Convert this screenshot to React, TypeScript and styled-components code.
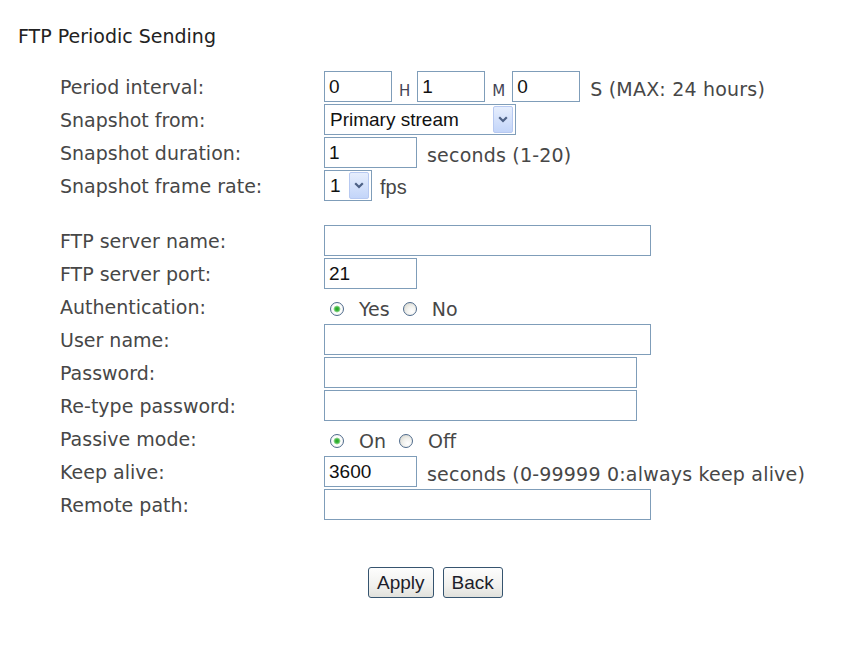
import React from 'react';
import styled, { createGlobalStyle } from 'styled-components';

const GlobalStyle = createGlobalStyle`
  body {
    margin: 0;
    background: #fff;
    font-family: "DejaVu Sans", Verdana, sans-serif;
  }
`;

const Page = styled.div`
  padding: 25px 0 40px 18px;
`;

const Title = styled.h1`
  margin: 0;
  font-size: 19px;
  line-height: 22px;
  font-weight: normal;
  color: #222;
`;

const Form = styled.div`
  margin: 23px 0 0 42px;
`;

const Row = styled.div`
  display: grid;
  grid-template-columns: 264px 1fr;
  height: 33px;
  align-items: center;
`;

const Spacer = styled.div`
  height: 22px;
`;

const Label = styled.div`
  font-size: 19px;
  line-height: 22px;
  color: #474747;
  white-space: nowrap;
`;

const Controls = styled.div`
  display: flex;
  align-items: center;
  height: 100%;
  font-size: 19px;
  color: #474747;
  white-space: nowrap;
`;

const TextBox = styled.input<{ $w: number }>`
  box-sizing: border-box;
  width: ${(p) => p.$w}px;
  height: 31px;
  margin: 0;
  padding: 0 4px;
  border: 1px solid #7f9db9;
  background: #fff;
  font-family: "Liberation Sans", Arial, sans-serif;
  font-size: 19px;
  color: #111;
  outline: none;
`;

const Unit = styled.span`
  font-size: 15px;
  color: #445;
  margin: 0 7px;
  padding-top: 8px;
`;

const Suffix = styled.span<{ $arial?: boolean }>`
  margin-left: ${(p) => (p.$arial ? 8 : 10)}px;
  padding-top: 4px;
  font-family: ${(p) => (p.$arial ? '"Liberation Sans", Arial, sans-serif' : 'inherit')};
  font-size: ${(p) => (p.$arial ? 20 : 19)}px;
  letter-spacing: ${(p) => (p.$arial ? 0 : 0.2)}px;
`;

const SelectShell = styled.div<{ $w: number }>`
  box-sizing: border-box;
  width: ${(p) => p.$w}px;
  height: 31px;
  display: flex;
  align-items: center;
  padding: 1px 2px 1px 5px;
  border: 1px solid #7f9db9;
  background: #fff;
  font-family: "Liberation Sans", Arial, sans-serif;
  font-size: 19px;
  color: #111;
`;

const SelectValue = styled.span`
  flex: 1;
`;

const ArrowButton = styled.span`
  box-sizing: border-box;
  width: 20px;
  height: 27px;
  display: flex;
  align-items: center;
  justify-content: center;
  border: 1px solid #b7c9f1;
  border-radius: 2px;
  background: linear-gradient(#e6eefd, #c3d5f9);
`;

const RadioGroup = styled.div`
  display: flex;
  align-items: center;
  gap: 13px;
  padding: 5px 0 0 6px;
`;

const Option = styled.label`
  display: flex;
  align-items: center;
  gap: 15px;
`;

const Radio = styled.input`
  appearance: none;
  box-sizing: border-box;
  width: 14px;
  height: 14px;
  margin: 0;
  border: 1.5px solid #4f6b8c;
  border-radius: 50%;
  background: radial-gradient(circle at 65% 70%, #fff 0, #f0f0ec 45%, #cfcfc6 100%);
  &:checked {
    background: radial-gradient(circle, #1f9f1f 0, #42bb42 2px, #9bd69b 3px, #fff 3.8px, #ececea 100%);
  }
`;

const ButtonBar = styled.div`
  display: flex;
  gap: 9px;
  margin-top: 46px;
  padding-left: 350px;
`;

const Button = styled.button`
  box-sizing: border-box;
  height: 31px;
  padding: 0 8px;
  border: 1px solid #36546f;
  border-radius: 3px;
  background: linear-gradient(#fdfdfd, #f1f1ee 60%, #e1e1dc);
  font-family: "Liberation Sans", Arial, sans-serif;
  font-size: 19px;
  color: #1d1d2b;
`;

const Chevron = () => (
  <svg width="10" height="7" viewBox="0 0 10 7">
    <path d="M1.2 1.2 L5 5 L8.8 1.2" fill="none" stroke="#4d6185" strokeWidth="2.2" />
  </svg>
);

const Select = ({ w, value }: { w: number; value: string }) => (
  <SelectShell $w={w}>
    <SelectValue>{value}</SelectValue>
    <ArrowButton>
      <Chevron />
    </ArrowButton>
  </SelectShell>
);

const Field = ({ label, children }: { label: string; children: React.ReactNode }) => (
  <Row>
    <Label>{label}</Label>
    <Controls>{children}</Controls>
  </Row>
);

const RadioPair = ({ name, options }: { name: string; options: string[] }) => (
  <RadioGroup>
    {options.map((o, i) => (
      <Option key={o}>
        <Radio type="radio" name={name} defaultChecked={i === 0} />
        {o}
      </Option>
    ))}
  </RadioGroup>
);

export default function App() {
  return (
    <Page>
      <GlobalStyle />
      <Title>FTP Periodic Sending</Title>
      <Form>
        <Field label="Period interval:">
          <TextBox $w={68} defaultValue="0" />
          <Unit>H</Unit>
          <TextBox $w={68} defaultValue="1" />
          <Unit>M</Unit>
          <TextBox $w={68} defaultValue="0" />
          <Suffix>S (MAX: 24 hours)</Suffix>
        </Field>
        <Field label="Snapshot from:">
          <Select w={192} value="Primary stream" />
        </Field>
        <Field label="Snapshot duration:">
          <TextBox $w={93} defaultValue="1" />
          <Suffix>seconds (1-20)</Suffix>
        </Field>
        <Field label="Snapshot frame rate:">
          <Select w={48} value="1" />
          <Suffix $arial>fps</Suffix>
        </Field>
        <Spacer />
        <Field label="FTP server name:">
          <TextBox $w={327} />
        </Field>
        <Field label="FTP server port:">
          <TextBox $w={93} defaultValue="21" />
        </Field>
        <Field label="Authentication:">
          <RadioPair name="auth" options={['Yes', 'No']} />
        </Field>
        <Field label="User name:">
          <TextBox $w={327} />
        </Field>
        <Field label="Password:">
          <TextBox $w={313} type="password" />
        </Field>
        <Field label="Re-type password:">
          <TextBox $w={313} type="password" />
        </Field>
        <Field label="Passive mode:">
          <RadioPair name="passive" options={['On', 'Off']} />
        </Field>
        <Field label="Keep alive:">
          <TextBox $w={93} defaultValue="3600" />
          <Suffix>seconds (0-99999 0:always keep alive)</Suffix>
        </Field>
        <Field label="Remote path:">
          <TextBox $w={327} />
        </Field>
      </Form>
      <ButtonBar>
        <Button>Apply</Button>
        <Button>Back</Button>
      </ButtonBar>
    </Page>
  );
}
